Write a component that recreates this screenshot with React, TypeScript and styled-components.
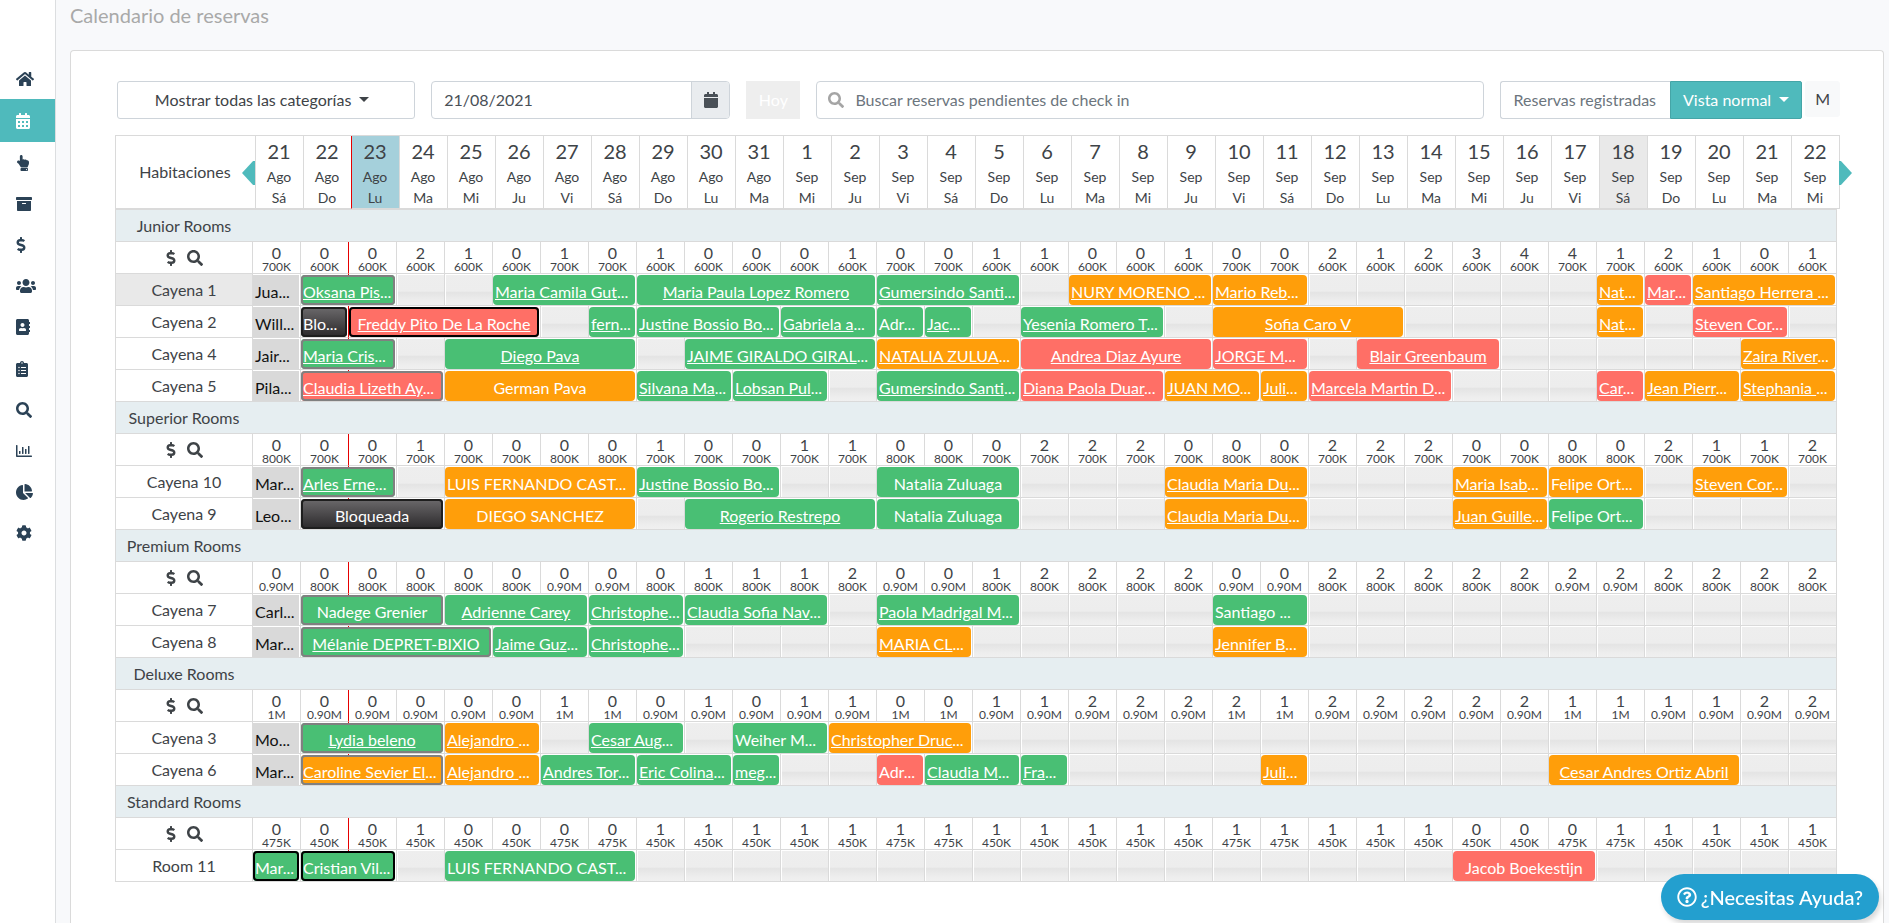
import React from "react";
import styled, { createGlobalStyle, css } from "styled-components";
import type { IconType } from "react-icons";
import {
  FaAddressBook,
  FaArchive,
  FaCalendar,
  FaCalendarAlt,
  FaChartPie,
  FaClipboardList,
  FaCog,
  FaDollarSign,
  FaHandPointUp,
  FaHome,
  FaRegChartBar,
  FaRegQuestionCircle,
  FaSearch,
  FaUsers,
} from "react-icons/fa";

const teal = "#4fbabc";
const line = "#dadada";
const ink = "#3e4347";

const GlobalStyle = createGlobalStyle`
  *, *::before, *::after { box-sizing: border-box; }
  body {
    margin: 0;
    background: #f8f9fb;
    color: ${ink};
    font-family: Lato, "Liberation Sans", sans-serif;
    font-size: 16px;
    line-height: 24px;
  }
  button, input { font: inherit; color: inherit; }
`;

/* ---------- Page frame ---------- */

const Page = styled.div`
  display: flex;
  min-height: 100vh;
`;

const Sidebar = styled.nav`
  flex: 0 0 56px;
  padding-top: 58px;
  background: #fff;
  border-right: 1px solid #dcdee0;
`;

const Menu = styled.ul`
  display: grid;
  grid-template-rows: 1fr 43px repeat(10, 1fr);
  height: 496px;
  margin: 0;
  padding: 0;
  list-style: none;
`;

const MenuLink = styled.a<{ $active?: boolean; $icon: number }>`
  display: flex;
  align-items: center;
  height: 100%;
  padding-left: 16px;
  color: ${(p) => (p.$active ? "#fff" : "#2b4256")};
  background: ${(p) => (p.$active ? teal : "transparent")};
  svg { width: ${(p) => p.$icon}px; height: 16px; }
`;

const Main = styled.main`
  display: flex;
  flex: 1;
  flex-direction: column;
  min-width: 0;
  padding: 0 5px 0 14px;
`;

const Title = styled.h1`
  margin: 0;
  height: 50px;
  padding-top: 3px;
  color: #a9a9a9;
  font-size: 20px;
  font-weight: 400;
  line-height: 24px;
`;

const Card = styled.section`
  flex: 1;
  padding: 30px 43px 41px 44px;
  background: #fff;
  border: 1px solid ${line};
  border-bottom: 0;
  border-radius: 4px 4px 0 0;
`;

/* ---------- Toolbar ---------- */

const Toolbar = styled.div`
  display: grid;
  grid-template-columns: 299fr 300fr 54px 669fr auto;
  column-gap: 16px;
  margin-bottom: 16px;
  padding-left: 2px;
`;

const Button = styled.button`
  height: 38px;
  padding: 0 13px;
  border: 1px solid #ced4da;
  border-radius: 3px;
  background: #fff;
  white-space: nowrap;
`;

const CategoryButton = styled(Button)`
  padding-right: 21px;
`;

const Caret = styled.span`
  display: inline-block;
  margin-left: 8px;
  border: 5px solid transparent;
  border-top-color: currentColor;
  border-bottom: 0;
  vertical-align: 4px;
`;

const TodayButton = styled(Button)`
  padding: 0;
  border-color: #eee;
  border-radius: 0;
  background: #eee;
  color: #fff;
`;

const Field = styled.label`
  display: flex;
  align-items: stretch;
  min-width: 0;
  height: 38px;
  border: 1px solid #ced4da;
  border-radius: 4px;
  background: #fff;
  overflow: hidden;
`;

const TextInput = styled.input`
  flex: 1;
  min-width: 0;
  padding: 0 12px;
  border: 0;
  outline: 0;
  background: none;
  color: #495057;
`;

const SearchInput = styled(TextInput)`
  padding-left: 0;
  &::placeholder { color: #6c757d; opacity: 1; }
`;

const FieldIcon = styled.span<{ $icon: number; $boxed?: boolean }>`
  display: flex;
  align-items: center;
  justify-content: center;
  width: 38px;
  color: #a5a5a5;
  ${(p) =>
    p.$boxed &&
    css`
      background: #e9ecef;
      border-left: 1px solid #ced4da;
      color: #495057;
    `}
  svg { width: ${(p) => p.$icon}px; height: 16px; }
`;

const ButtonGroup = styled.div`
  display: flex;
  align-items: flex-start;
`;

const RegisteredButton = styled(Button)`
  padding: 0 14px 0 13px;
  border-right: 0;
  border-radius: 3px 0 0 3px;
  color: #6c757d;
`;

const ViewButton = styled(Button)`
  padding: 0 12px;
  border-color: #45a5a7;
  border-radius: 0 2px 2px 0;
  background: ${teal};
  color: #fff;
`;

const ModeButton = styled(Button)`
  height: 36px;
  margin-left: 3px;
  padding: 0 9px;
  border-color: #f8f9fa;
  background: #f8f9fa;
`;

/* ---------- Calendar ---------- */

const HeaderFrame = styled.div`
  position: relative;
`;

const Table = styled.table`
  width: 100%;
  table-layout: fixed;
  border-collapse: separate;
  border-spacing: 0;
  border-top: 1px solid ${line};
  border-left: 1px solid ${line};
  text-align: center;
`;

const BodyTable = styled(Table)`
  width: calc(100% - 3px);
`;

const LabelColumn = styled.col<{ $width: number }>`
  width: ${(p) => p.$width}px;
`;

const cell = css`
  height: 32px;
  padding: 0;
  border-right: 1px solid ${line};
  border-bottom: 1px solid ${line};
  font-weight: 400;
`;

const RoomsHead = styled.th`
  ${cell}
  height: 73px;
  padding-right: 1px;
`;

const DayHead = styled.th<{ $tone?: "selected" | "today"; $marker?: boolean }>`
  ${cell}
  height: 73px;
  padding: 2px 1px 0 0;
  font-size: 14px;
  line-height: 21px;
  vertical-align: top;
  background: ${(p) =>
    p.$tone === "selected" ? "#a5d0db" : p.$tone === "today" ? "#e9e9e9" : "#fff"};
  ${(p) => p.$marker && css`border-right-color: #e60000;`}
`;

const DayNumber = styled.div`
  margin-bottom: 1px;
  font-size: 20px;
  line-height: 27px;
`;

const ArrowButton = styled.button<{ $side: "left" | "right" }>`
  position: absolute;
  top: 26px;
  ${(p) => (p.$side === "left" ? "left: 127px;" : "left: calc(100% - 1px);")}
  width: 13px;
  height: 24px;
  padding: 0;
  border: 0;
  background: ${teal};
  clip-path: ${(p) =>
    p.$side === "left"
      ? "polygon(0 50%, 85% 0, 100% 0, 100% 100%, 85% 100%)"
      : "polygon(100% 50%, 15% 0, 0 0, 0 100%, 15% 100%)"};
`;

const CategoryLabel = styled.th`
  ${cell}
  border-right: 0;
  padding-right: 1px;
  background: #e6eef1;
`;

const CategoryFill = styled.td`
  ${cell}
  background: #e6eef1;
`;

const Tools = styled.div`
  display: flex;
  align-items: center;
  justify-content: center;
  gap: 11px;
`;

const ToolButton = styled.button<{ $icon: number }>`
  display: flex;
  padding: 0;
  border: 0;
  background: none;
  svg { width: ${(p) => p.$icon}px; height: 16px; }
`;

const PriceCell = styled.td<{ $marker?: boolean }>`
  ${cell}
  padding-top: 4px;
  line-height: 14px;
  ${(p) => p.$marker && css`border-right-color: #e60000;`}
`;

const Price = styled.div`
  font-size: 12px;
  line-height: 13px;
`;

const RoomLabel = styled.th<{ $hover?: boolean }>`
  ${cell}
  background: ${(p) => (p.$hover ? "#e9e9e9" : "#fff")};
`;

const FreeCell = styled.td`
  ${cell}
  background: linear-gradient(#eee 0, #ededed 55%, #e4e4e4 60%, #ededed 85%, #f0f0f0 100%);
  box-shadow: inset 1px 1px #fff;
`;

/* The red line that marks the current day runs behind the bars it crosses. */
const StayCell = styled.td<{ $marked?: boolean; $span: number }>`
  ${cell}
  vertical-align: top;
  ${(p) =>
    p.$marked &&
    (p.$span === 1
      ? css`border-right-color: #e60000;`
      : css`
          background: linear-gradient(
              to right,
              transparent calc(100% / ${p.$span} - 1px),
              #e60000 calc(100% / ${p.$span} - 1px),
              #e60000 calc(100% / ${p.$span}),
              transparent calc(100% / ${p.$span})
            )
            border-box;
        `)}
`;

type Tone = "g" | "o" | "r" | "b" | "p";

const tones: Record<Tone, string> = {
  g: "#49bf74",
  o: "#ff9e0a",
  r: "#ff6f66",
  b: "linear-gradient(#6c6a6c, #2a282a)",
  p: "#d9d9d9",
};

const outlines = { grey: "#808080", black: "#000", dark: "#1e1e1e" };

const Bar = styled.div<{ $tone: Tone; $outline?: keyof typeof outlines; $cut: boolean }>`
  height: 30px;
  margin: 1px 1px 0 0;
  padding: 5px 2px 0;
  overflow: hidden;
  border-radius: ${(p) => (p.$tone === "p" ? 0 : 4)}px;
  background: ${(p) => tones[p.$tone]};
  box-shadow: ${(p) => (p.$outline ? `inset 0 0 0 2px ${outlines[p.$outline]}` : "none")};
  color: ${(p) => (p.$tone === "p" ? "#111" : "#fff")};
  line-height: 24px;
  text-align: ${(p) => (p.$cut ? "left" : "center")};
  white-space: pre;
`;

const GuestLink = styled.a`
  color: inherit;
  text-decoration: underline;
`;

const HelpButton = styled.button`
  position: fixed;
  right: 10px;
  bottom: 3px;
  display: flex;
  align-items: center;
  gap: 4px;
  height: 46px;
  padding: 0 16px;
  border: 0;
  border-radius: 23px;
  background: #239fcf;
  box-shadow: 2px 4px 5px rgba(0, 0, 0, 0.15);
  color: #fff;
  font-size: 20px;
  font-weight: 500;
  white-space: nowrap;
`;

/* ---------- Data ---------- */

const menu: { label: string; icon: IconType; width: number }[] = [
  { label: "Inicio", icon: FaHome, width: 18 },
  { label: "Calendario", icon: FaCalendarAlt, width: 14 },
  { label: "Reservar", icon: FaHandPointUp, width: 14 },
  { label: "Productos", icon: FaArchive, width: 16 },
  { label: "Tarifas", icon: FaDollarSign, width: 10 },
  { label: "Usuarios", icon: FaUsers, width: 20 },
  { label: "Contactos", icon: FaAddressBook, width: 14 },
  { label: "Tareas", icon: FaClipboardList, width: 12 },
  { label: "Buscar", icon: FaSearch, width: 16 },
  { label: "Reportes", icon: FaRegChartBar, width: 16 },
  { label: "Estadísticas", icon: FaChartPie, width: 17 },
  { label: "Ajustes", icon: FaCog, width: 16 },
];

const weekdays = ["Sá", "Do", "Lu", "Ma", "Mi", "Ju", "Vi"];

const days = Array.from({ length: 33 }, (_, i) => ({
  number: i < 11 ? 21 + i : i - 10,
  month: i < 11 ? "Ago" : "Sep",
  weekday: weekdays[i % 7],
  highRate: i % 7 === 6 || i % 7 === 0,
}));

type Stay = {
  start: number;
  span: number;
  tone: Tone;
  name: string;
  plain?: boolean;
  outline?: keyof typeof outlines;
};

const s = (
  start: number,
  span: number,
  tone: Tone,
  name: string,
  extra: Partial<Stay> = {}
): Stay => ({ start, span, tone, name, ...extra });

const plain = { plain: true };
const past = (name: string) => s(0, 1, "p", name, plain);
const grey = { outline: "grey" as const };

type Category = {
  name: string;
  rates: [string, string];
  free: string;
  rooms: { name: string; hover?: boolean; stays: Stay[] }[];
};

const categories: Category[] = [
  {
    name: "Junior Rooms",
    rates: ["600K", "700K"],
    free: "000210101000100110010021234412101",
    rooms: [
      {
        name: "Cayena 1",
        hover: true,
        stays: [
          past("Jua..."),
          s(1, 2, "g", "Oksana Pis...", grey),
          s(5, 3, "g", "Maria Camila Gut..."),
          s(8, 5, "g", "Maria Paula Lopez Romero"),
          s(13, 3, "g", "Gumersindo Santi..."),
          s(17, 3, "o", "NURY MORENO ..."),
          s(20, 2, "o", "Mario Reb..."),
          s(28, 1, "o", "Nat..."),
          s(29, 1, "r", "Mar..."),
          s(30, 3, "o", "Santiago Herrera ..."),
        ],
      },
      {
        name: "Cayena 2",
        stays: [
          past("Will..."),
          s(1, 1, "b", "Blo...", { plain: true, outline: "dark" }),
          s(2, 4, "r", "Freddy Pito De La Roche", { outline: "black" }),
          s(7, 1, "g", "fern..."),
          s(8, 3, "g", "Justine Bossio Bo..."),
          s(11, 2, "g", "Gabriela a..."),
          s(13, 1, "g", "Adr...", plain),
          s(14, 1, "g", "Jac..."),
          s(16, 3, "g", "Yesenia Romero T..."),
          s(20, 4, "o", "Sofia Caro V"),
          s(28, 1, "o", "Nat..."),
          s(30, 2, "r", "Steven Cor..."),
        ],
      },
      {
        name: "Cayena 4",
        stays: [
          past("Jair..."),
          s(1, 2, "g", "Maria Cris...", grey),
          s(4, 4, "g", "Diego Pava"),
          s(9, 4, "g", "JAIME GIRALDO GIRAL..."),
          s(13, 3, "o", "NATALIA ZULUA..."),
          s(16, 4, "r", "Andrea Diaz Ayure"),
          s(20, 2, "r", "JORGE M..."),
          s(23, 3, "r", "Blair Greenbaum"),
          s(31, 2, "o", "Zaira River..."),
        ],
      },
      {
        name: "Cayena 5",
        stays: [
          past("Pila..."),
          s(1, 3, "r", "Claudia Lizeth Ay...", grey),
          s(4, 4, "o", "German Pava", plain),
          s(8, 2, "g", "Silvana Ma..."),
          s(10, 2, "g", "Lobsan Pul..."),
          s(13, 3, "g", "Gumersindo Santi..."),
          s(16, 3, "r", "Diana Paola Duar..."),
          s(19, 2, "o", "JUAN MO..."),
          s(21, 1, "o", "Juli..."),
          s(22, 3, "r", "Marcela Martin D..."),
          s(28, 1, "r", "Car..."),
          s(29, 2, "o", "Jean Pierr..."),
          s(31, 2, "o", "Stephania ..."),
        ],
      },
    ],
  },
  {
    name: "Superior Rooms",
    rates: ["700K", "800K"],
    free: "000100001001100022200022200002112",
    rooms: [
      {
        name: "Cayena 10",
        stays: [
          past("Mar..."),
          s(1, 2, "g", "Arles Erne...", grey),
          s(4, 4, "o", "LUIS FERNANDO CAST...", plain),
          s(8, 3, "g", "Justine Bossio Bo..."),
          s(13, 3, "g", "Natalia Zuluaga", plain),
          s(19, 3, "o", "Claudia Maria Du..."),
          s(25, 2, "o", "Maria Isab..."),
          s(27, 2, "o", "Felipe Ort...", plain),
          s(30, 2, "o", "Steven Cor..."),
        ],
      },
      {
        name: "Cayena 9",
        stays: [
          past("Leo..."),
          s(1, 3, "b", "Bloqueada", { plain: true, outline: "dark" }),
          s(4, 4, "o", "DIEGO SANCHEZ", plain),
          s(9, 4, "g", "Rogerio Restrepo"),
          s(13, 3, "g", "Natalia Zuluaga", plain),
          s(19, 3, "o", "Claudia Maria Du..."),
          s(25, 2, "o", "Juan Guille..."),
          s(27, 2, "g", "Felipe Ort...", plain),
        ],
      },
    ],
  },
  {
    name: "Premium Rooms",
    rates: ["800K", "0.90M"],
    free: "000000000111200122220022222222222",
    rooms: [
      {
        name: "Cayena 7",
        stays: [
          past("Carl..."),
          s(1, 3, "g", "Nadege Grenier", { plain: true, outline: "grey" }),
          s(4, 3, "g", "Adrienne Carey"),
          s(7, 2, "g", "Christophe..."),
          s(9, 3, "g", "Claudia Sofia Nav..."),
          s(13, 3, "g", "Paola Madrigal M..."),
          s(20, 2, "g", "Santiago ...", plain),
        ],
      },
      {
        name: "Cayena 8",
        stays: [
          past("Mar..."),
          s(1, 4, "g", "Mélanie DEPRET-BIXIO", grey),
          s(5, 2, "g", "Jaime Guz..."),
          s(7, 2, "g", "Christophe..."),
          s(13, 2, "o", "MARIA CL..."),
          s(20, 2, "o", "Jennifer B..."),
        ],
      },
    ],
  },
  {
    name: "Deluxe Rooms",
    rates: ["0.90M", "1M"],
    free: "000000100101100112222122222111122",
    rooms: [
      {
        name: "Cayena 3",
        stays: [
          past("Mo..."),
          s(1, 3, "g", "Lydia beleno", grey),
          s(4, 2, "o", "Alejandro ..."),
          s(7, 2, "g", "Cesar Aug..."),
          s(10, 2, "g", "Weiher M...", plain),
          s(12, 3, "o", "Christopher Druc..."),
        ],
      },
      {
        name: "Cayena 6",
        stays: [
          past("Mar..."),
          s(1, 3, "o", "Caroline Sevier El...", grey),
          s(4, 2, "o", "Alejandro ..."),
          s(6, 2, "g", "Andres Tor..."),
          s(8, 2, "g", "Eric Colina..."),
          s(10, 1, "g", "meg..."),
          s(13, 1, "r", "Adr...", plain),
          s(14, 2, "g", "Claudia M..."),
          s(16, 1, "g", "Fra..."),
          s(21, 1, "o", "Juli..."),
          s(27, 4, "o", "Cesar Andres Ortiz Abril"),
        ],
      },
    ],
  },
  {
    name: "Standard Rooms",
    rates: ["450K", "475K"],
    free: "000100001111111111111111100011111",
    rooms: [
      {
        name: "Room 11",
        stays: [
          s(0, 1, "g", "Mar...", { plain: true, outline: "black" }),
          s(1, 2, "g", "Cristian Vil...", { plain: true, outline: "black" }),
          s(4, 4, "g", "LUIS FERNANDO CAST...", plain),
          s(25, 3, "r", "Jacob Boekestijn", plain),
        ],
      },
    ],
  },
];

/* ---------- Components ---------- */

function StayBar({ stay }: { stay: Stay }) {
  const cut = stay.name.endsWith("...");
  const shown = cut ? stay.name.slice(0, -3) : stay.name;
  return (
    <StayCell colSpan={stay.span} $span={stay.span} $marked={stay.start === 1}>
      <Bar $tone={stay.tone} $outline={stay.outline} $cut={cut}>
        {stay.plain ? shown : <GuestLink href="#reserva">{shown}</GuestLink>}
        {cut && "..."}
      </Bar>
    </StayCell>
  );
}

function RoomRow({ name, hover, stays }: Category["rooms"][number]) {
  const cells: React.ReactNode[] = [];
  let day = 0;
  while (day < days.length) {
    const start = day;
    const stay = stays.find((item) => item.start === start);
    cells.push(stay ? <StayBar key={day} stay={stay} /> : <FreeCell key={day} />);
    day += stay ? stay.span : 1;
  }
  return (
    <tr>
      <RoomLabel scope="row" $hover={hover}>{name}</RoomLabel>
      {cells}
    </tr>
  );
}

function CategoryRows({ category }: { category: Category }) {
  return (
    <tbody>
      <tr>
        <CategoryLabel scope="rowgroup">{category.name}</CategoryLabel>
        <CategoryFill colSpan={days.length} />
      </tr>
      <tr>
        <RoomLabel as="td">
          <Tools>
            <ToolButton type="button" aria-label="Tarifas" $icon={10}><FaDollarSign /></ToolButton>
            <ToolButton type="button" aria-label="Buscar" $icon={16}><FaSearch /></ToolButton>
          </Tools>
        </RoomLabel>
        {days.map((day, i) => (
          <PriceCell key={i} $marker={i === 1}>
            {category.free[i]}
            <Price>{category.rates[day.highRate ? 1 : 0]}</Price>
          </PriceCell>
        ))}
      </tr>
      {category.rooms.map((room) => (
        <RoomRow key={room.name} {...room} />
      ))}
    </tbody>
  );
}

export default function App() {
  return (
    <Page>
      <GlobalStyle />
      <Sidebar>
        <Menu>
          {menu.map(({ label, icon: Icon, width }, i) => (
            <li key={label}>
              <MenuLink href="#menu" aria-label={label} $active={i === 1} $icon={width}>
                <Icon />
              </MenuLink>
            </li>
          ))}
        </Menu>
      </Sidebar>
      <Main>
        <Title>Calendario de reservas</Title>
        <Card>
          <Toolbar>
            <CategoryButton type="button">Mostrar todas las categorías<Caret /></CategoryButton>
            <Field>
              <TextInput aria-label="Fecha" defaultValue="21/08/2021" />
              <FieldIcon $boxed $icon={14}><FaCalendar /></FieldIcon>
            </Field>
            <TodayButton type="button">Hoy</TodayButton>
            <Field>
              <FieldIcon $icon={16}><FaSearch /></FieldIcon>
              <SearchInput
                aria-label="Buscar reservas"
                placeholder="Buscar reservas pendientes de check in"
              />
            </Field>
            <ButtonGroup>
              <RegisteredButton type="button">Reservas registradas</RegisteredButton>
              <ViewButton type="button">Vista normal<Caret /></ViewButton>
              <ModeButton type="button">M</ModeButton>
            </ButtonGroup>
          </Toolbar>

          <HeaderFrame>
            <Table>
              <colgroup>
                <LabelColumn $width={140} />
                <col span={days.length} />
              </colgroup>
              <thead>
                <tr>
                  <RoomsHead scope="col">Habitaciones</RoomsHead>
                  {days.map((day, i) => (
                    <DayHead
                      key={i}
                      scope="col"
                      $tone={i === 2 ? "selected" : i === 28 ? "today" : undefined}
                      $marker={i === 1}
                    >
                      <DayNumber>{day.number}</DayNumber>
                      <div>{day.month}</div>
                      <div>{day.weekday}</div>
                    </DayHead>
                  ))}
                </tr>
              </thead>
            </Table>
            <ArrowButton $side="left" type="button" aria-label="Días anteriores" />
            <ArrowButton $side="right" type="button" aria-label="Días siguientes" />
          </HeaderFrame>

          <BodyTable>
            <colgroup>
              <LabelColumn $width={137} />
              <col span={days.length} />
            </colgroup>
            {categories.map((category) => (
              <CategoryRows key={category.name} category={category} />
            ))}
          </BodyTable>
        </Card>
      </Main>
      <HelpButton type="button"><FaRegQuestionCircle />¿Necesitas Ayuda?</HelpButton>
    </Page>
  );
}
